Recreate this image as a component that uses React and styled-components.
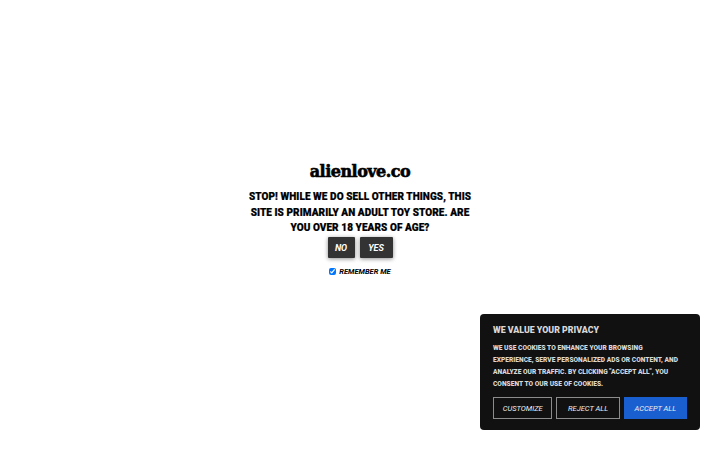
import React from "react";
import styled, { createGlobalStyle } from "styled-components";

const GlobalStyle = createGlobalStyle`
  html, body {
    margin: 0;
    height: 100%;
    background: #fff;
  }
  #root {
    height: 100%;
  }
`;

const Page = styled.main`
  height: 450px;
  display: flex;
  flex-direction: column;
  align-items: center;
  padding-top: 161px;
  box-sizing: border-box;
  color: #000;
  font-family: Roboto, sans-serif;
`;

const Brand = styled.h1`
  margin: 0 0 6px;
  font-family: "DejaVu Serif", serif;
  font-size: 16px;
  font-weight: 900;
  line-height: 22px;
  letter-spacing: -0.5px;
  -webkit-text-stroke: 0.6px #000;
`;

const Question = styled.p`
  margin: 0;
  width: 226px;
  text-align: center;
  font-size: 10px;
  font-weight: 900;
  line-height: 15.7px;
  letter-spacing: 0.07px;
  -webkit-text-stroke: 0.2px #000;
  text-transform: uppercase;
`;

const Choices = styled.div`
  display: flex;
  gap: 5px;
  margin-top: 1px;
`;

const Choice = styled.button`
  height: 21px;
  width: ${(p) => p.$width}px;
  padding: 0;
  border: 0;
  border-radius: 1px;
  background: #333;
  color: #fff;
  box-shadow: 0 1px 4px rgba(0, 0, 0, 0.45);
  font-family: Roboto, sans-serif;
  font-size: 9px;
  font-style: italic;
  font-weight: 700;
  text-transform: uppercase;
`;

const Remember = styled.label`
  display: flex;
  align-items: center;
  gap: 3px;
  margin-top: 9px;
  font-size: 7.5px;
  font-style: italic;
  font-weight: 700;
  text-transform: uppercase;
`;

const Tick = styled.input`
  width: 7px;
  height: 7px;
  margin: 0;
  accent-color: #0075ff;
`;

const Banner = styled.aside`
  position: fixed;
  right: 20px;
  bottom: 20px;
  width: 220px;
  box-sizing: border-box;
  padding: 10px 13px 11px;
  border-radius: 4px;
  background: #111;
  color: #d8d8d8;
  font-family: Roboto, sans-serif;
`;

const BannerTitle = styled.h2`
  margin: 0 0 6px;
  font-size: 8.8px;
  font-weight: 900;
  line-height: 12px;
  text-transform: uppercase;
`;

const BannerText = styled.p`
  margin: 0 0 7px;
  padding-right: 4px;
  font-size: 6.6px;
  font-weight: 900;
  line-height: 12px;
  letter-spacing: 0.02px;
  text-transform: uppercase;
`;

const BannerActions = styled.div`
  display: flex;
  gap: 4px;
`;

const BannerButton = styled.button`
  flex: ${(p) => p.$grow};
  height: 22px;
  padding: 0;
  box-sizing: border-box;
  border: 1.5px solid ${(p) => (p.$primary ? "#1a5fd0" : "#8c8c8c")};
  background: ${(p) => (p.$primary ? "#1a5fd0" : "transparent")};
  color: #f0f0f0;
  font-family: Roboto, sans-serif;
  font-size: 7.5px;
  font-style: italic;
  text-transform: uppercase;
`;

export default function App() {
  return (
    <>
      <GlobalStyle />
      <Page>
        <Brand>alienlove.co</Brand>
        <Question>
          Stop! While we do sell other things, this site is primarily an adult
          toy store. Are you over 18 years of age?
        </Question>
        <Choices>
          <Choice $width={27}>No</Choice>
          <Choice $width={33}>Yes</Choice>
        </Choices>
        <Remember>
          <Tick type="checkbox" defaultChecked />
          Remember me
        </Remember>
      </Page>
      <Banner>
        <BannerTitle>We value your privacy</BannerTitle>
        <BannerText>
          We use cookies to enhance your browsing experience, serve personalized
          ads or content, and analyze our traffic. By clicking "Accept All", you
          consent to our use of cookies.
        </BannerText>
        <BannerActions>
          <BannerButton $grow={59}>Customize</BannerButton>
          <BannerButton $grow={63}>Reject All</BannerButton>
          <BannerButton $grow={63} $primary>
            Accept All
          </BannerButton>
        </BannerActions>
      </Banner>
    </>
  );
}
